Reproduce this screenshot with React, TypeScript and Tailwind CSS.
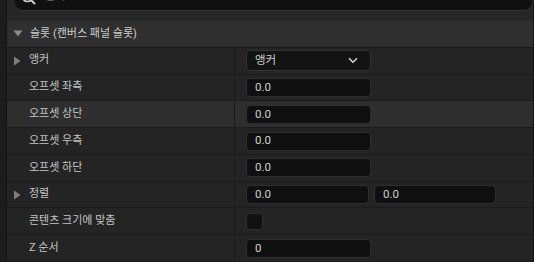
import React from "react";

const font = { fontFamily: 'Roboto, "Noto Sans CJK KR", sans-serif' };

function Tri() {
  return (
    <svg width="8" height="10" viewBox="0 0 8 10" className="shrink-0">
      <path d="M1 0.5 L7.5 5 L1 9.5 Z" fill="#7e7e7e" />
    </svg>
  );
}

function Input({ value, w = "w-[125px]" }: { value: string; w?: string }) {
  return (
    <div className={`${w} h-[19px] rounded-[4px] bg-[#0f0f0f] border border-[#2e2e2e] flex items-center pl-[8px] text-[11.5px] text-[#d2d2d2]`}>
      {value}
    </div>
  );
}

function Row({
  label,
  tri,
  hover,
  children,
}: {
  label: string;
  tri?: boolean;
  hover?: boolean;
  children: React.ReactNode;
}) {
  return (
    <div className={`flex h-[27px] border-b border-[#1b1b1b] ${hover ? "bg-[#2e2e2e]" : "bg-[#242424]"}`}>
      <div className="w-[228px] flex items-center border-r border-[#1b1b1b]">
        <div className="w-[14px] flex justify-end">{tri ? <Tri /> : null}</div>
        <span className="ml-[8px] text-[11px] text-[#c4c4c4]">{label}</span>
      </div>
      <div className="flex-1 flex items-center pl-[11px] gap-[5px]">{children}</div>
    </div>
  );
}

export default function App() {
  return (
    <div className="w-[534px] h-[262px] bg-[#1a1a1a] flex overflow-hidden" style={font}>
      <div className="w-[7px] shrink-0 bg-[#1c1c1c] border-r border-[#121212]" />
      <div className="flex-1 flex flex-col border-r border-[#161616]">
        <div className="bg-[#262626] pl-[8px] pr-[1px]">
          <div className="h-[26px] -mt-[15px] bg-[#101010] rounded-b-[8px] border-b border-[#333] flex items-center pl-[6px] gap-[9px]">
            <svg width="15" height="15" viewBox="0 0 15 15">
              <circle cx="6.5" cy="6.5" r="5" stroke="#d0d0d0" strokeWidth="1.7" fill="none" />
              <path d="M10 10 L14 14" stroke="#d0d0d0" strokeWidth="1.9" />
            </svg>
            <span className="text-[11px] text-[#6a6a6a]">검색</span>
          </div>
          <div className="h-[10px]" />
        </div>
        <div className="h-[27px] bg-[#2f2f2f] border-b border-[#1b1b1b] flex items-center">
          <svg width="10" height="7" viewBox="0 0 10 7" className="ml-[6px]">
            <path d="M0.5 0.5 L9.5 0.5 L5 6.5 Z" fill="#8a8a8a" />
          </svg>
          <span className="ml-[7px] text-[11px] text-[#cdcdcd]">슬롯 (캔버스 패널 슬롯)</span>
        </div>
        <Row label="앵커" tri>
          <div className="w-[125px] h-[21px] rounded-[4px] bg-[#131313] border border-[#333] flex items-center justify-between pl-[8px] pr-[12px]">
            <span className="text-[11.5px] text-[#d0d0d0]">앵커</span>
            <svg width="10" height="7" viewBox="0 0 10 7">
              <path d="M1 1.2 L5 5.2 L9 1.2" stroke="#d0d0d0" strokeWidth="1.6" fill="none" />
            </svg>
          </div>
        </Row>
        <Row label="오프셋 좌측">
          <Input value="0.0" />
        </Row>
        <Row label="오프셋 상단" hover>
          <Input value="0.0" />
        </Row>
        <Row label="오프셋 우측">
          <Input value="0.0" />
        </Row>
        <Row label="오프셋 하단">
          <Input value="0.0" />
        </Row>
        <Row label="정렬" tri>
          <Input value="0.0" w="w-[123px]" />
          <Input value="0.0" w="w-[122px]" />
        </Row>
        <Row label="콘텐츠 크기에 맞춤">
          <div className="w-[17px] h-[17px] rounded-[3px] bg-[#111] border border-[#2e2e2e]" />
        </Row>
        <Row label="Z 순서">
          <Input value="0" />
        </Row>
      </div>
    </div>
  );
}
